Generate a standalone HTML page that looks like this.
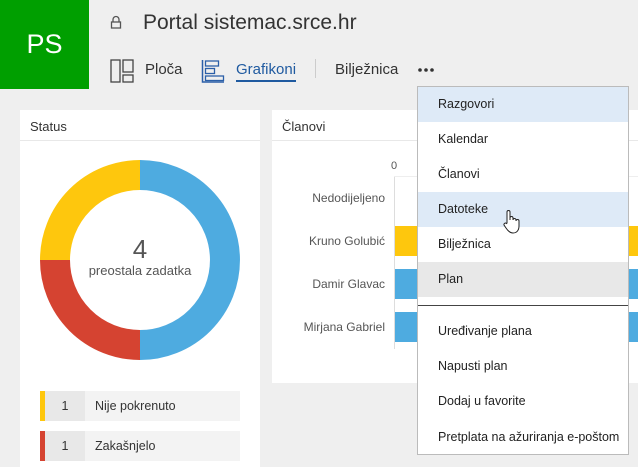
<!DOCTYPE html>
<html><head><meta charset="utf-8"><style>
*{margin:0;padding:0;box-sizing:border-box}
body{width:638px;height:467px;overflow:hidden;background:#efefef;font-family:"Liberation Sans",sans-serif;color:#333;position:relative}
.a{position:absolute}
.logo{left:0;top:0;width:89px;height:89px;background:#009f00;color:#fff;font-size:27px;display:flex;align-items:center;justify-content:center}
.title{left:143px;top:11px;font-size:21px;color:#333}
.nav{font-size:15px;color:#333;top:61px}
.card{background:#fff}
.hdr{font-size:13px;color:#333}
.menu{left:417px;top:86px;width:212px;height:369px;background:#fff;border:1px solid #bbb}
.mi{position:absolute;left:0;width:210px;height:35px;font-size:12.5px;color:#222;padding-left:20px;line-height:35px}
.lbl{font-size:12px;color:#555;text-align:right;width:120px;left:265px}
</style></head><body>
<div class="a logo">PS</div>
<svg class="a" style="left:110px;top:15px" width="12" height="14" viewBox="0 0 12 14"><path d="M3 7V4.5a3 3 0 0 1 6 0V7" fill="none" stroke="#555" stroke-width="1.3"/><rect x="1.5" y="7" width="9" height="6" fill="none" stroke="#555" stroke-width="1.3"/></svg>
<div class="a title">Portal sistemac.srce.hr</div>
<svg class="a" style="left:110px;top:59px" width="24" height="24" viewBox="0 0 24 24"><rect x="1" y="1" width="9" height="22" fill="none" stroke="#444" stroke-width="1.3"/><rect x="13" y="1" width="10" height="12" fill="none" stroke="#444" stroke-width="1.3"/><rect x="13" y="16" width="10" height="7" fill="none" stroke="#444" stroke-width="1.3"/></svg>
<div class="a nav" style="left:145px">Ploča</div>
<svg class="a" style="left:201px;top:59px" width="24" height="24" viewBox="0 0 24 24"><path d="M1.5 1v22H23" fill="none" stroke="#2b5fa8" stroke-width="1.5"/><rect x="4.5" y="2" width="13" height="5" fill="none" stroke="#2b5fa8" stroke-width="1.3"/><rect x="4.5" y="9.5" width="9" height="5" fill="none" stroke="#2b5fa8" stroke-width="1.3"/><rect x="4.5" y="17" width="18" height="4.5" fill="none" stroke="#2b5fa8" stroke-width="1.3"/></svg>
<div class="a nav" style="left:236px;color:#1f5aa0">Grafikoni</div>
<div class="a" style="left:236px;top:80px;width:60px;height:2px;background:#1f5aa0"></div>
<div class="a" style="left:315px;top:59px;width:1px;height:19px;background:#ccc"></div>
<div class="a nav" style="left:335px">Bilježnica</div>
<svg class="a" style="left:417px;top:66px" width="20" height="8" viewBox="0 0 20 8"><circle cx="3" cy="4" r="1.8" fill="#333"/><circle cx="9" cy="4" r="1.8" fill="#333"/><circle cx="15" cy="4" r="1.8" fill="#333"/></svg>

<div class="a card" style="left:20px;top:110px;width:240px;height:357px">
 <div class="a hdr" style="left:10px;top:9px">Status</div>
 <div class="a" style="left:0;top:30px;width:240px;height:1px;background:#e8e8e8"></div>
 <svg class="a" style="left:20px;top:50px" width="200" height="200" viewBox="0 0 200 200">
  <path d="M100 15A85 85 0 0 1 100 185" fill="none" stroke="#4eabe0" stroke-width="30"/>
  <path d="M100 185A85 85 0 0 1 15 100" fill="none" stroke="#d54331" stroke-width="30"/>
  <path d="M15 100A85 85 0 0 1 100 15" fill="none" stroke="#fec70d" stroke-width="30"/>
 </svg>
 <div class="a" style="left:0;width:240px;top:124px;text-align:center;font-size:26px;color:#555">4</div>
 <div class="a" style="left:0;width:240px;top:153px;text-align:center;font-size:13px;color:#555">preostala zadatka</div>
 <div class="a" style="left:20px;top:281px;width:200px;height:30px;background:#f3f3f3"></div>
 <div class="a" style="left:20px;top:281px;width:5px;height:30px;background:#fec70d"></div>
 <div class="a" style="left:25px;top:281px;width:40px;height:30px;background:#e8e8e8;text-align:center;line-height:30px;font-size:12.5px">1</div>
 <div class="a" style="left:75px;top:281px;line-height:30px;font-size:12.5px">Nije pokrenuto</div>
 <div class="a" style="left:20px;top:321px;width:200px;height:30px;background:#f3f3f3"></div>
 <div class="a" style="left:20px;top:321px;width:5px;height:30px;background:#d54331"></div>
 <div class="a" style="left:25px;top:321px;width:40px;height:30px;background:#e8e8e8;text-align:center;line-height:30px;font-size:12.5px">1</div>
 <div class="a" style="left:75px;top:321px;line-height:30px;font-size:12.5px">Zakašnjelo</div>
</div>

<div class="a card" style="left:272px;top:110px;width:366px;height:273px">
 <div class="a hdr" style="left:10px;top:9px">Članovi</div>
 <div class="a" style="left:0;top:30px;width:366px;height:1px;background:#e8e8e8"></div>
 <div class="a" style="left:119px;top:50px;font-size:11px;color:#555">0</div>
 <div class="a" style="left:122px;top:66px;width:1px;height:173px;background:#ddd"></div>
 <div class="a" style="left:122px;top:66px;width:244px;height:1px;background:#eee"></div>
 <div class="a" style="left:123px;top:116px;width:243px;height:30px;background:#fec70d"></div>
 <div class="a" style="left:123px;top:159px;width:243px;height:30px;background:#4eabe0"></div>
 <div class="a" style="left:123px;top:202px;width:243px;height:30px;background:#4eabe0"></div>
</div>
<div class="a lbl" style="top:191px">Nedodijeljeno</div>
<div class="a lbl" style="top:234px">Kruno Golubić</div>
<div class="a lbl" style="top:277px">Damir Glavac</div>
<div class="a lbl" style="top:320px">Mirjana Gabriel</div>

<div class="a menu">
 <div class="mi" style="top:0;background:#deeaf7">Razgovori</div>
 <div class="mi" style="top:35px">Kalendar</div>
 <div class="mi" style="top:70px">Članovi</div>
 <div class="mi" style="top:105px;background:#deeaf7">Datoteke</div>
 <div class="mi" style="top:140px">Bilježnica</div>
 <div class="mi" style="top:175px;background:#e8e8e8">Plan</div>
 <div class="a" style="left:0;top:218px;width:210px;height:1px;background:#444"></div>
 <div class="mi" style="top:227px">Uređivanje plana</div>
 <div class="mi" style="top:262px">Napusti plan</div>
 <div class="mi" style="top:297px">Dodaj u favorite</div>
 <div class="mi" style="top:333px">Pretplata na ažuriranja e-poštom</div>
</div>
<svg class="a" style="left:502px;top:209px" width="18" height="26" viewBox="0 0 18 26"><path d="M5 14V3a1.5 1.5 0 0 1 3 0v8V9a1.5 1.5 0 0 1 3 0v2a1.5 1.5 0 0 1 3 0v1a1.5 1.5 0 0 1 3 0v5c0 4-2 7-6 7-3 0-5-2-7-5l-2-3a1.5 1.5 0 0 1 2.5-1.5z" fill="#fff" stroke="#222" stroke-width="1"/></svg>
</body></html>
